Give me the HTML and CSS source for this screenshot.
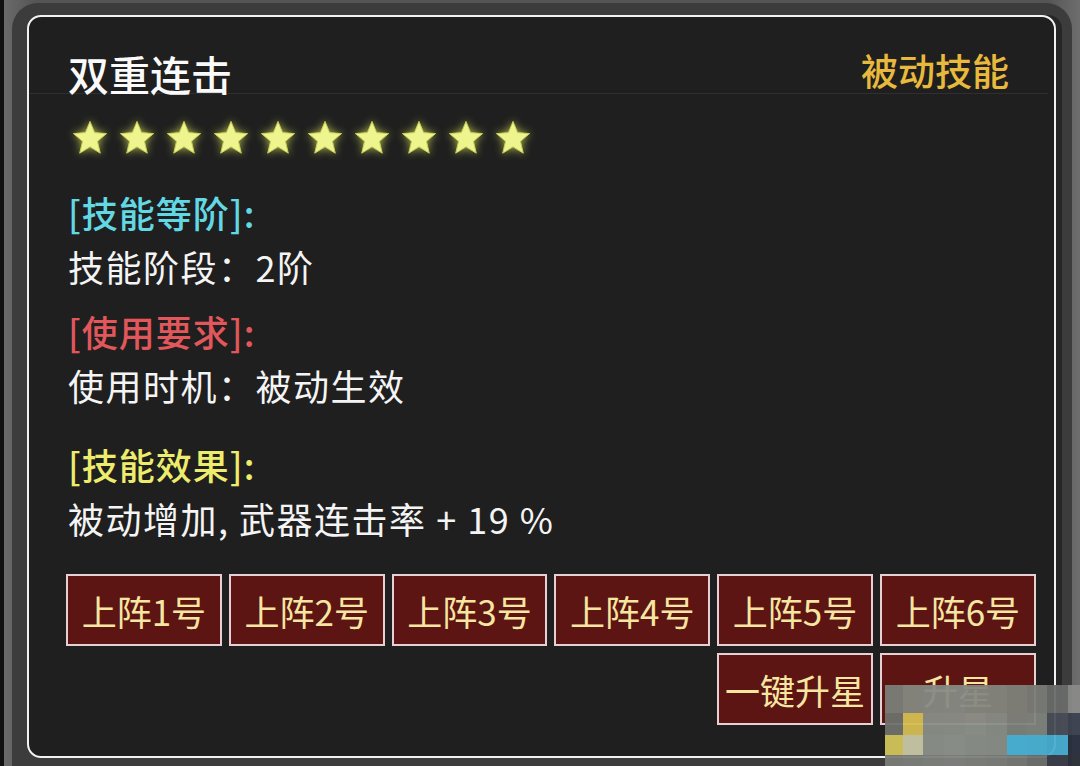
FILE: index.html
```html
<!DOCTYPE html>
<html lang="zh-CN">

<head>
  <meta charset="UTF-8" />
  <meta name="viewport" content="width=device-width, initial-scale=1.0" />
  <title>技能详情</title>
  <link rel="stylesheet" href="styles.css">
</head>

<body>
  <div class="screen">
    <div class="frame">
      <!-- 技能详情弹窗 -->
      <div class="panel">
        <div class="head">
          <h1 class="title">双重连击</h1>
          <span class="type">被动技能</span>
        </div>

        <div class="stars" id="stars"></div>

        <div class="info">
          <div class="sec">
            <p class="tag cyan">[技能等阶]:</p>
            <p class="txt">技能阶段：2阶</p>
          </div>
          <div class="sec sec2">
            <p class="tag red">[使用要求]:</p>
            <p class="txt">使用时机：被动生效</p>
          </div>
          <div class="sec sec3">
            <p class="tag yellow">[技能效果]:</p>
            <p class="txt">被动增加, 武器连击率 + 19 %</p>
          </div>
        </div>

        <!-- 操作按钮 -->
        <div class="btns">
          <button>上阵1号</button>
          <button>上阵2号</button>
          <button>上阵3号</button>
          <button>上阵4号</button>
          <button>上阵5号</button>
          <button>上阵6号</button>
          <button class="col5">一键升星</button>
          <button class="col6">升星</button>
        </div>
      </div>
    </div>

    <!-- 右下角打码 -->
    <div class="mosaic">
      <i style="background:#7b7f79"></i><i style="background:#858982"></i><i style="background:#868a84"></i><i style="background:#878b85"></i><i style="background:#848881"></i><i style="background:#83877f"></i><i style="background:#7f837c"></i><i style="background:#7a7d78"></i><i style="background:#6a6c6a"></i><i style="background:#8a8a88"></i>
      <i style="background:#6e716c"></i><i style="background:#d6bf52"></i><i style="background:#8a8f88"></i><i style="background:#8b9089"></i><i style="background:#8d928b"></i><i style="background:#898e87"></i><i style="background:#7e827c"></i><i style="background:#80847e"></i><i style="background:#4a4e58"></i><i style="background:#3c4250"></i>
      <i style="background:#d4c65a"></i><i style="background:#c9c8a8"></i><i style="background:#8c918b"></i><i style="background:#8e938d"></i><i style="background:#8b908a"></i><i style="background:#8a8f89"></i><i style="background:#4ab4d8"></i><i style="background:#4bb3d6"></i><i style="background:#48aed2"></i><i style="background:#2a3040"></i>
      <i style="background:#7a7c78"></i><i style="background:#7c7e7a"></i><i style="background:#7e807c"></i><i style="background:#80827e"></i><i style="background:#7d7f7b"></i><i style="background:#7b7d79"></i><i style="background:#767874"></i><i style="background:#6d6f6c"></i><i style="background:#3a3e48"></i><i style="background:#2c3038"></i>
    </div>
  </div>

  <script>
    // 星级 10 颗
    let stars = document.querySelector('#stars')
    let level = 10
    for (let i = 0; i < level; i++) {
      stars.innerHTML += `
      <svg class="star" viewBox="0 0 24 24">
        <polygon points="12,1.5 14.9,8.6 22.5,9.2 16.7,14.1 18.5,21.6 12,17.6 5.5,21.6 7.3,14.1 1.5,9.2 9.1,8.6" />
      </svg>`
    }
  </script>
</body>

</html>
```

FILE: styles.css
```css
* {
  margin: 0;
  padding: 0;
  box-sizing: border-box;
}

body {
  background: #5a5a5a;
  font-family: "Noto Sans CJK SC", "Noto Sans", sans-serif;
  overflow: hidden;
}

.screen {
  position: relative;
  width: 1080px;
  height: 766px;
  border-left: 4px solid #111;
  background: linear-gradient(90deg, #6a6a6a, #555 3%, #555 97%, #6e6e6e);
  padding: 3px 0 0 8px;
}

.frame {
  width: 1060px;
  height: 790px;
  background: #3c3c3c;
  border-radius: 26px;
  padding: 12px 0 0 15px;
}

.panel {
  width: 1029px;
  height: 743px;
  border: 2px solid #f2f2f2;
  border-radius: 14px;
  background: #1f1f1f;
  box-shadow: 6px 0 0 #262626;
}

.head {
  height: 77px;
  margin-right: 6px;
  padding: 0 39px 0 39px;
  border-bottom: 1px solid #2f2f2f;
  display: flex;
  justify-content: space-between;
  align-items: flex-end;
}

.title {
  font-size: 41px;
  font-weight: 500;
  line-height: 40px;
  color: #fafafa;
}

.type {
  font-size: 37px;
  font-weight: 500;
  line-height: 40px;
  margin-bottom: 3px;
  color: #e8b93c;
}

.stars {
  display: flex;
  gap: 9px;
  margin-top: 25px;
  padding-left: 42px;
  height: 38px;
}

.star {
  width: 38px;
  height: 38px;
  fill: #eef48e;
  stroke: #c9cf55;
  stroke-width: 0.6;
  filter: drop-shadow(0 0 4px rgba(220, 232, 90, 0.75));
}

.info {
  margin-top: 28px;
  padding-left: 39px;
}

.info p {
  font-size: 36px;
  line-height: 54px;
  letter-spacing: 1.5px;
  color: #f4f4f4;
}

.info .tag {
  font-weight: 500;
  letter-spacing: 1px;
}

.cyan {
  color: #62d8e4 !important;
}

.red {
  color: #e2575b !important;
}

.yellow {
  color: #eeec6c !important;
}

.sec2 {
  margin-top: 11px;
}

.sec3 {
  margin-top: 25px;
}

.btns {
  margin-top: 29px;
  padding-left: 37px;
  display: grid;
  grid-template-columns: repeat(6, 155.8px);
  grid-auto-rows: 72px;
  gap: 7px 7px;
}

.btns button {
  border: 2px solid #e6d0d4;
  background: #5c1512;
  color: #f6e6a2;
  font: 400 35px "Noto Sans CJK SC", sans-serif;
  cursor: pointer;
}

.btns .col5 {
  grid-column: 5;
}

.btns .col6 {
  grid-column: 6;
}

.mosaic {
  position: absolute;
  left: 881px;
  top: 685px;
  width: 195px;
  height: 81px;
  display: grid;
  grid-template-columns: 18px 20px 21px 21px 21px 21px 20px 20px 21px 12px;
  grid-template-rows: 28px 22px 20px 11px;
  opacity: 0.94;
}
```
